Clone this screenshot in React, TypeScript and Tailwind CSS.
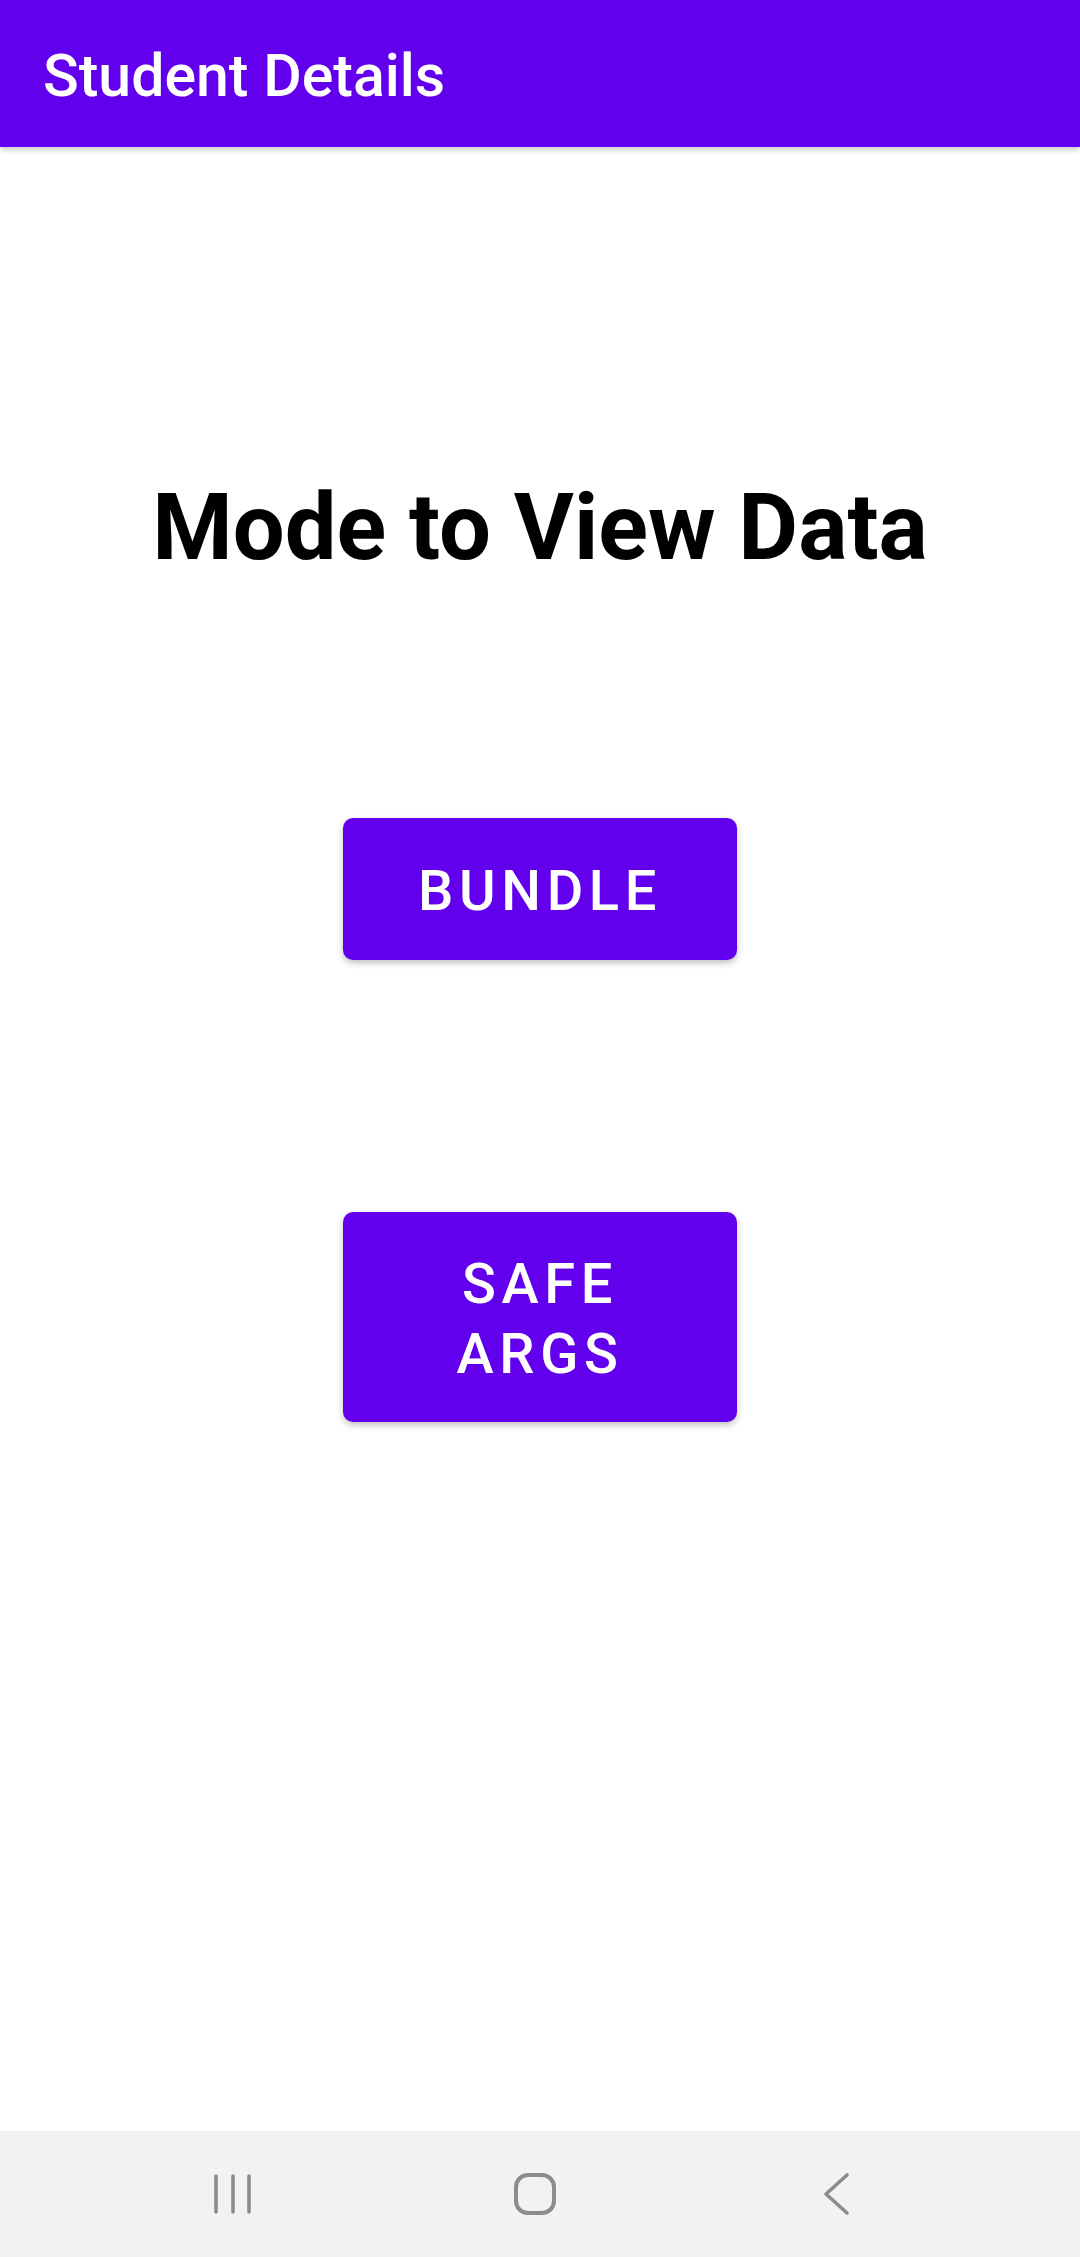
import React from 'react';

const NavBar: React.FC = () => (
  <div className="mt-auto flex h-[126px] items-center bg-[#f2f2f2] pl-[203px]">
    <div className="flex w-[60px] justify-center">
      <svg width="40" height="42" viewBox="0 0 40 42">
        <g stroke="#8c8c8c" strokeWidth="3.6" strokeLinecap="round">
          <line x1="3" y1="3" x2="3" y2="39" />
          <line x1="20" y1="3" x2="20" y2="39" />
          <line x1="36" y1="3" x2="36" y2="39" />
        </g>
      </svg>
    </div>
    <div className="ml-[242px] flex w-[60px] justify-center">
      <svg width="44" height="44" viewBox="0 0 44 44">
        <rect x="3" y="3" width="38" height="38" rx="12" fill="none" stroke="#8c8c8c" strokeWidth="4" />
      </svg>
    </div>
    <div className="ml-[242px] flex w-[60px] justify-center">
      <svg width="28" height="44" viewBox="0 0 28 44">
        <polyline points="24,3 3,22 24,41" fill="none" stroke="#8c8c8c" strokeWidth="3.6" strokeLinecap="round" strokeLinejoin="round" />
      </svg>
    </div>
  </div>
);

const ModeButton: React.FC<{ lines: string[]; height: string }> = ({ lines, height }) => (
  <button
    className={`flex w-[394px] ${height} flex-col items-center justify-center rounded-[10px] bg-[#6200ee] pt-[4px] text-[56px] font-medium leading-[70px] tracking-[0.1em] text-white shadow-[0_3px_6px_rgba(0,0,0,0.25)]`}
  >
    {lines.map(line => (
      <span key={line}>{line}</span>
    ))}
  </button>
);

export default function App() {
  return (
    <div className="flex min-h-[2257px] flex-col bg-white font-['Roboto',sans-serif]">
      <header className="flex h-[147px] items-center bg-[#6200ee] px-[43px] pt-[3px] shadow-[0_3px_6px_rgba(0,0,0,0.2)]">
        <h1 className="text-[59px] font-medium leading-none text-white">Student Details</h1>
      </header>

      <main className="flex flex-col items-center">
        <h2 className="mt-[335px] text-[92px] font-bold leading-none text-black">Mode to View Data</h2>
        <div className="mt-[244px]">
          <ModeButton lines={['BUNDLE']} height="h-[142px]" />
        </div>
        <div className="mt-[252px]">
          <ModeButton lines={['SAFE', 'ARGS']} height="h-[210px]" />
        </div>
      </main>

      <NavBar />
    </div>
  );
}
